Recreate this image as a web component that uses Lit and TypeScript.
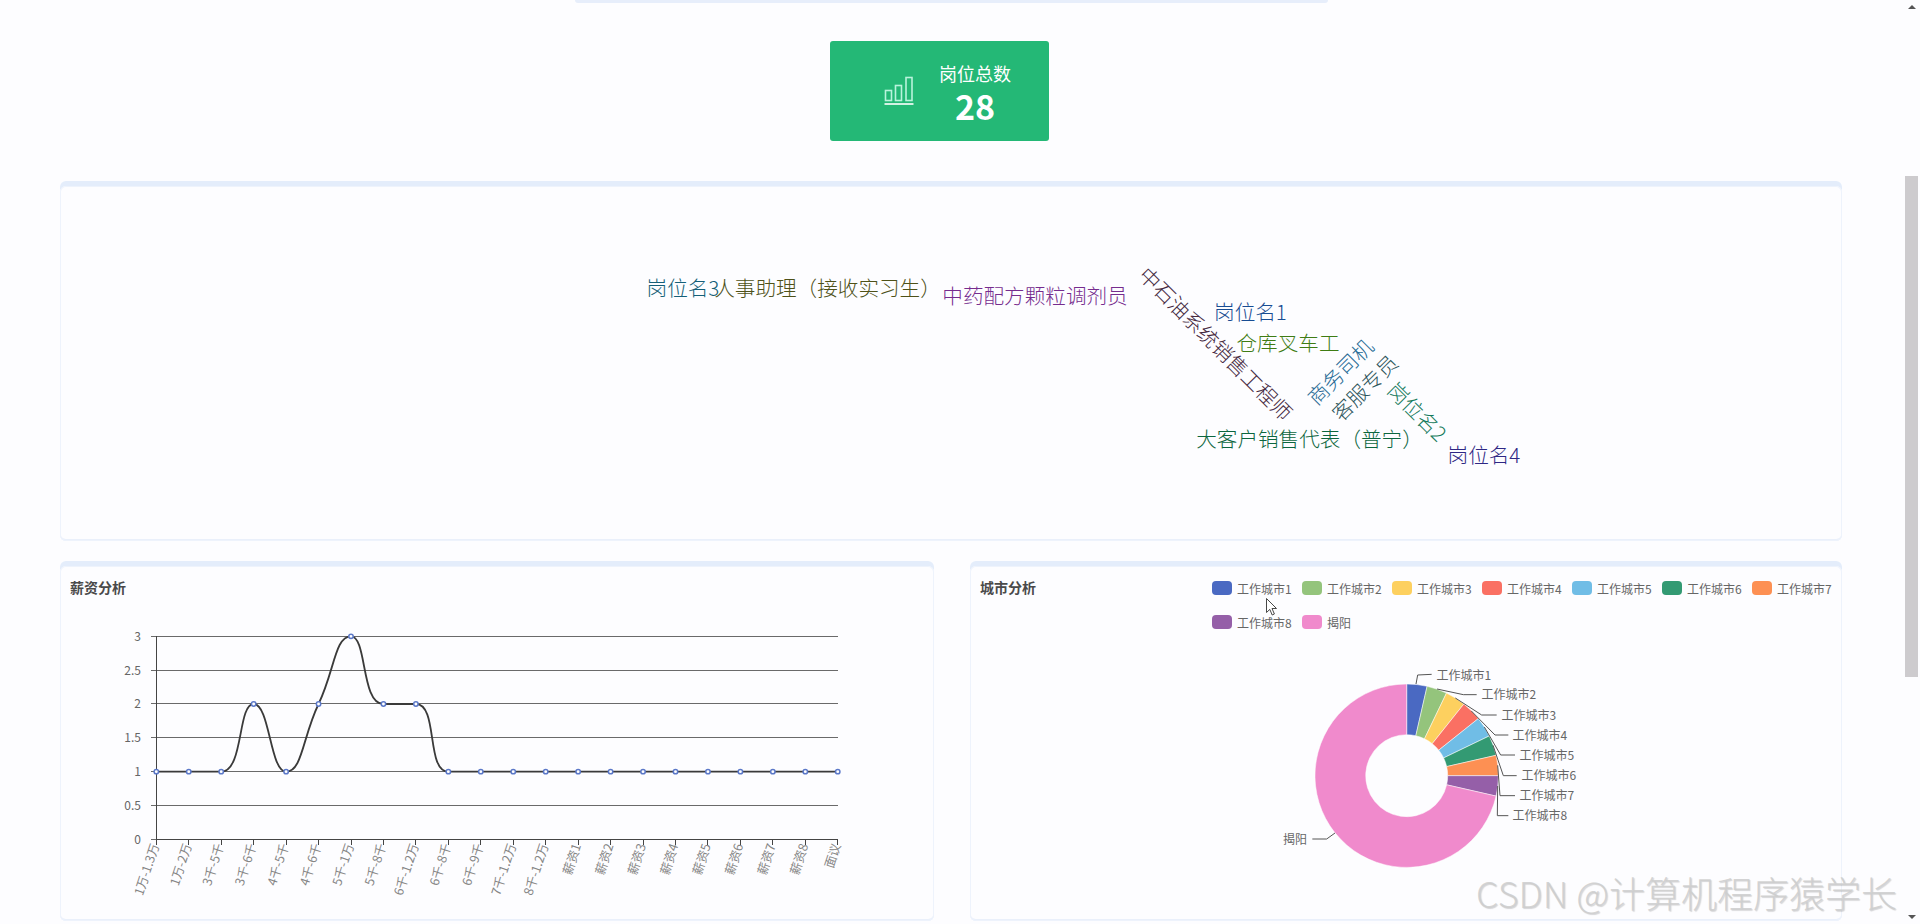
import { LitElement, html, css, svg } from "lit";
import { customElement } from "lit/decorators.js";

const words = [
  { t: "岗位名3", x: 683, y: 286.5, r: 0, c: "#145f78" },
  { t: "人事助理（接收实习生）", x: 827.5, y: 286.5, r: 0, c: "#4e5118" },
  { t: "中药配方颗粒调剂员", x: 1035, y: 294.5, r: 0, c: "#762c8e" },
  { t: "中石油系统销售工程师", x: 1216.5, y: 343, r: 45, c: "#462a3f" },
  { t: "岗位名1", x: 1250.5, y: 310.5, r: 0, c: "#184c92" },
  { t: "仓库叉车工", x: 1288, y: 341.5, r: 0, c: "#3f7c14" },
  { t: "商务司机", x: 1339.5, y: 371, r: -45, c: "#276a94" },
  { t: "客服专员", x: 1364, y: 387, r: -45, c: "#2c545a" },
  { t: "岗位名2", x: 1418, y: 411, r: 45, c: "#157a5c" },
  { t: "大客户销售代表（普宁）", x: 1309.5, y: 438, r: 0, c: "#0c663e" },
  { t: "岗位名4", x: 1484, y: 454, r: 0, c: "#2e2784" },
];

const cats = [
  "1万-1.3万", "1万-2万", "3千-5千", "3千-6千", "4千-5千", "4千-6千", "5千-1万", "5千-8千",
  "6千-1.2万", "6千-8千", "6千-9千", "7千-1.2万", "8千-1.2万", "薪资1", "薪资2", "薪资3",
  "薪资4", "薪资5", "薪资6", "薪资7", "薪资8", "面议",
];
const vals = [1, 1, 1, 2, 1, 2, 3, 2, 2, 1, 1, 1, 1, 1, 1, 1, 1, 1, 1, 1, 1, 1];
const X0 = 156.3;
const STEP = 32.45;
const Y0 = 840.3;
const UNIT = 67.65;
const pts = vals.map((v, i) => ({ x: X0 + i * STEP, y: Y0 - v * UNIT }));
const gridRows = [
  { v: 0, y: 840.5 },
  { v: 0.5, y: 806.5 },
  { v: 1, y: 772.5 },
  { v: 1.5, y: 738.5 },
  { v: 2, y: 704.5 },
  { v: 2.5, y: 671.5 },
  { v: 3, y: 637.5 },
];

function clamp(v: number, a: number, b: number) {
  return Math.min(Math.max(a, b), Math.max(Math.min(a, b), v));
}

function smoothPath(p: { x: number; y: number }[], k = 0.5) {
  const outs: number[][] = [];
  const ins: number[][] = [];
  p.forEach((c, i) => {
    const a = p[Math.max(i - 1, 0)];
    const b = p[Math.min(i + 1, p.length - 1)];
    const lp = Math.hypot(c.x - a.x, c.y - a.y);
    const ln = Math.hypot(b.x - c.x, b.y - c.y);
    const sum = lp + ln || 1;
    const r = ln / sum;
    const vx = b.x - a.x;
    const vy = b.y - a.y;
    let oy = c.y + vy * k * r;
    let iy = c.y - vy * k * (1 - r);
    const ox = c.x + vx * k * r;
    const ix = c.x - vx * k * (1 - r);
    const coy = clamp(oy, c.y, b.y);
    if (coy !== oy) {
      oy = coy;
      iy = c.y - (oy - c.y) * (ln ? lp / ln : 0);
    }
    const ciy = clamp(iy, a.y, c.y);
    if (ciy !== iy) {
      iy = ciy;
      oy = c.y - (iy - c.y) * (lp ? ln / lp : 0);
    }
    outs.push([ox, clamp(oy, c.y, b.y)]);
    ins.push([ix, clamp(iy, a.y, c.y)]);
  });
  let d = `M${p[0].x} ${p[0].y}`;
  for (let i = 0; i < p.length - 1; i++) {
    d += `C${outs[i][0]} ${outs[i][1]} ${ins[i + 1][0]} ${ins[i + 1][1]} ${p[i + 1].x} ${p[i + 1].y}`;
  }
  return d;
}

const slices = [
  { n: "工作城市1", v: 1, c: "#4a69c2" },
  { n: "工作城市2", v: 1, c: "#94c47c" },
  { n: "工作城市3", v: 1, c: "#fdd05f" },
  { n: "工作城市4", v: 1, c: "#fa7063" },
  { n: "工作城市5", v: 1, c: "#70bde6" },
  { n: "工作城市6", v: 1, c: "#339a73" },
  { n: "工作城市7", v: 1, c: "#fd9053" },
  { n: "工作城市8", v: 1, c: "#955fa8" },
  { n: "揭阳", v: 20, c: "#f08acc" },
];
const CX = 1406.7;
const CY = 776.7;
const RO = 91.7;
const RI = 41;

function arc(a0: number, a1: number) {
  const pt = (r: number, a: number) => `${CX + r * Math.sin(a)} ${CY - r * Math.cos(a)}`;
  const big = a1 - a0 > Math.PI ? 1 : 0;
  return `M${pt(RO, a0)}A${RO} ${RO} 0 ${big} 1 ${pt(RO, a1)}L${pt(RI, a1)}A${RI} ${RI} 0 ${big} 0 ${pt(RI, a0)}Z`;
}

const z = (x: number, y: number) => `${1250 + x / 3},${650 + y / 3}`;
const pieLabels = [
  { t: "工作城市1", x: 1436.5, y: 675, l: [z(498, 105), z(503, 78), z(545, 76)] },
  { t: "工作城市2", x: 1481.5, y: 694.5, l: [z(561, 120), z(640, 137), z(680, 137)] },
  { t: "工作城市3", x: 1501.5, y: 715, l: [z(616, 147), z(695, 198), z(740, 198)] },
  { t: "工作城市4", x: 1512.5, y: 735, l: [z(664, 186), z(735, 258), z(775, 258)] },
  { t: "工作城市5", x: 1519.5, y: 755, l: [z(703, 234), z(752, 318), z(795, 318)] },
  { t: "工作城市6", x: 1521.5, y: 775.5, l: [z(729, 289), z(760, 380), z(800, 380)] },
  { t: "工作城市7", x: 1519.5, y: 795.5, l: [z(743, 349), z(750, 440), z(795, 440)] },
  { t: "工作城市8", x: 1512.5, y: 815.5, l: [z(743, 411), z(742, 500), z(775, 500)] },
];

@customElement("app-root")
export class AppRoot extends LitElement {
  static styles = css`
    :host {
      display: flex;
      position: relative;
      width: 1920px;
      height: 924px;
      overflow: hidden;
      background: #fdfdff;
      font-family: "Noto Sans CJK SC", "Liberation Sans", sans-serif;
      color: #444;
    }
    .main {
      width: 1905px;
      box-sizing: border-box;
      padding: 0 63px 0 60px;
      display: flex;
      flex-direction: column;
    }
    .sliver {
      width: 753px;
      height: 3px;
      margin-left: 515px;
      background: #e7eefb;
      border-radius: 0 0 3px 3px;
      flex: none;
    }
    .stat {
      flex: none;
      box-sizing: border-box;
      width: 219px;
      height: 100px;
      margin: 38px 0 0 770px;
      border-radius: 3px;
      background: #24b876;
      color: #fff;
      display: flex;
      align-items: center;
      padding-left: 54px;
    }
    .stat svg {
      display: block;
      flex: none;
      margin-top: -1px;
    }
    .stat-text {
      width: 72px;
      margin-left: 25px;
      text-align: center;
    }
    .stat-label {
      font-size: 18px;
      line-height: 26px;
      padding-top: 3px;
      white-space: nowrap;
    }
    .stat-value {
      font-size: 34px;
      font-weight: 700;
      line-height: 40px;
    }
    .panel {
      flex: none;
      box-sizing: border-box;
      height: 360px;
      padding-top: 5px;
      background: #e4edfb;
      border-radius: 6px;
      display: flex;
      flex-direction: column;
    }
    .card {
      flex: 1;
      min-height: 0;
      background: #fdfdff;
      border-radius: 6px;
      box-shadow: inset 0 0 0 1px #eef3fc, inset 0 -2px 0 #eaf0fb;
      display: flex;
      flex-direction: column;
    }
    .cloud {
      margin-top: 40px;
    }
    .row {
      flex: none;
      margin-top: 20px;
      display: grid;
      grid-template-columns: 874px 872px;
      column-gap: 36px;
    }
    .head {
      flex: none;
      height: 64px;
      box-sizing: border-box;
      padding-top: 12px;
      display: flex;
      justify-content: space-between;
      align-items: flex-start;
    }
    .title {
      margin-left: 10px;
      font-size: 14px;
      font-weight: 700;
      line-height: 18px;
      color: #4a4a4a;
      white-space: nowrap;
    }
    .legend {
      width: 630px;
      margin-top: 3px;
      display: flex;
      flex-wrap: wrap;
      row-gap: 20px;
    }
    .item {
      width: 90px;
      height: 14px;
      display: flex;
      align-items: center;
      font-size: 12px;
      color: #666;
      white-space: nowrap;
    }
    .swatch {
      width: 20px;
      height: 14px;
      border-radius: 4px;
      margin-right: 5px;
      flex: none;
    }
    svg.chart {
      display: block;
      flex: none;
    }
    .word {
      font-size: 20.6px;
      font-weight: 300;
      text-anchor: middle;
      dominant-baseline: central;
    }
    .axis {
      font-size: 12px;
      fill: #666;
    }
    .xlab {
      font-size: 12.5px;
      fill: #858585;
      text-anchor: end;
    }
    .ylab {
      text-anchor: end;
      dominant-baseline: central;
    }
    .plab {
      font-size: 12px;
      fill: #666;
      dominant-baseline: central;
    }
    .grid {
      stroke: #6a6a6a;
      stroke-width: 1;
      shape-rendering: crispEdges;
    }
    .axisline {
      stroke: #444;
      stroke-width: 1;
      shape-rendering: crispEdges;
    }
    .scroll {
      width: 15px;
      flex: none;
      display: flex;
      flex-direction: column;
      align-items: stretch;
    }
    .up,
    .down {
      width: 0;
      height: 0;
      margin-left: 3px;
      border-left: 4px solid transparent;
      border-right: 4px solid transparent;
      flex: none;
    }
    .up {
      margin-top: 5px;
      border-bottom: 4px solid #555;
    }
    .down {
      margin-top: 238px;
      border-top: 4px solid #555;
    }
    .thumb {
      width: 13px;
      height: 501px;
      margin-top: 167px;
      background: #cdcbce;
      flex: none;
    }
    .cursor {
      position: absolute;
      left: 1265px;
      top: 597px;
    }
    .mark {
      position: absolute;
      left: 1476px;
      top: 866px;
      font-size: 36px;
      font-weight: 300;
      line-height: 52px;
      white-space: nowrap;
      color: rgba(205, 205, 205, 0.85);
      text-shadow: 1px 1px 1px rgba(0, 0, 0, 0.16);
      pointer-events: none;
    }
  `;

  private cloud() {
    return html`<svg class="chart" width="1782" height="355" viewBox="60 186 1782 355">
      ${words.map(
        (w) => svg`<text class="word" x=${w.x} y=${w.y} fill=${w.c} transform=${`rotate(${w.r} ${w.x} ${w.y})`}>${w.t}</text>`
      )}
    </svg>`;
  }

  private line() {
    const xEnd = X0 + 21 * STEP;
    return html`<svg class="chart" width="874" height="289" viewBox="60 631 874 289">
      ${gridRows.map(
        (r) => svg`<line class="grid" x1="151" x2=${xEnd} y1=${r.y} y2=${r.y}></line>
          <text class="axis ylab" x="141" y=${r.y - 1.5}>${r.v}</text>`
      )}
      <line class="axisline" x1="156.5" x2="156.5" y1="637" y2="840.5"></line>
      <line class="axisline" x1=${X0} x2=${xEnd} y1="840.5" y2="840.5"></line>
      ${cats.map((c, i) => {
        const x = X0 + i * STEP;
        return svg`<line class="axisline" x1=${x} x2=${x} y1="840.5" y2="845.5"></line>
          <text class="xlab" transform=${`translate(${x + 3} ${Y0 + 6}) rotate(-72)`}>${c}</text>`;
      })}
      <path d=${smoothPath(pts)} fill="none" stroke="#3a3a3a" stroke-width="1.8"></path>
      ${pts.map((p) => svg`<circle cx=${p.x} cy=${p.y} r="2.2" fill="#fff" stroke="#5b78c8" stroke-width="1.5"></circle>`)}
    </svg>`;
  }

  private pie() {
    const total = slices.reduce((s, d) => s + d.v, 0);
    let a = 0;
    return html`<svg class="chart" width="872" height="289" viewBox="970 631 872 289">
      ${slices.map((s) => {
        const a0 = a;
        a += (s.v / total) * Math.PI * 2;
        return svg`<path d=${arc(a0, a)} fill=${s.c} stroke="#fff" stroke-width="0.5"></path>`;
      })}
      ${pieLabels.map(
        (l) => svg`<polyline points=${l.l.join(" ")} fill="none" stroke="#555" stroke-width="1"></polyline>
          <text class="plab" x=${l.x} y=${l.y}>${l.t}</text>`
      )}
      <polyline points=${[z(255, 552), z(230, 570), z(187, 570)].join(" ")} fill="none" stroke="#555" stroke-width="1"></polyline>
      <text class="plab" x="1283" y="839">揭阳</text>
    </svg>`;
  }

  render() {
    return html`
      <div class="main">
        <div class="sliver"></div>
        <div class="stat">
          <svg width="30" height="30" viewBox="0 0 30 30" fill="none" stroke="#b9f3dc" stroke-width="1.6">
            <rect x="1.5" y="14.5" width="6" height="10"></rect>
            <rect x="11.5" y="9.5" width="6" height="15"></rect>
            <rect x="22" y="1.5" width="6" height="23"></rect>
            <line x1="0.5" x2="29.5" y1="28" y2="28" stroke="#fff"></line>
          </svg>
          <div class="stat-text">
            <div class="stat-label">岗位总数</div>
            <div class="stat-value">28</div>
          </div>
        </div>
        <div class="panel cloud"><div class="card">${this.cloud()}</div></div>
        <div class="row">
          <div class="panel">
            <div class="card">
              <div class="head"><div class="title">薪资分析</div></div>
              ${this.line()}
            </div>
          </div>
          <div class="panel">
            <div class="card">
              <div class="head">
                <div class="title">城市分析</div>
                <div class="legend">
                  ${slices.map(
                    (s) => html`<div class="item"><span class="swatch" style=${`background:${s.c}`}></span>${s.n}</div>`
                  )}
                </div>
              </div>
              ${this.pie()}
            </div>
          </div>
        </div>
      </div>
      <div class="scroll">
        <div class="up"></div>
        <div class="thumb"></div>
        <div class="down"></div>
      </div>
      <svg class="cursor" width="14" height="20" viewBox="0 0 14 20">
        <path d="M1.5 1.5V15.5L4.8 12.4L7.2 18L9.4 17L7 11.5H11.5Z" fill="#fff" stroke="#333" stroke-width="0.9"></path>
      </svg>
      <div class="mark">CSDN @计算机程序猿学长</div>
    `;
  }
}
